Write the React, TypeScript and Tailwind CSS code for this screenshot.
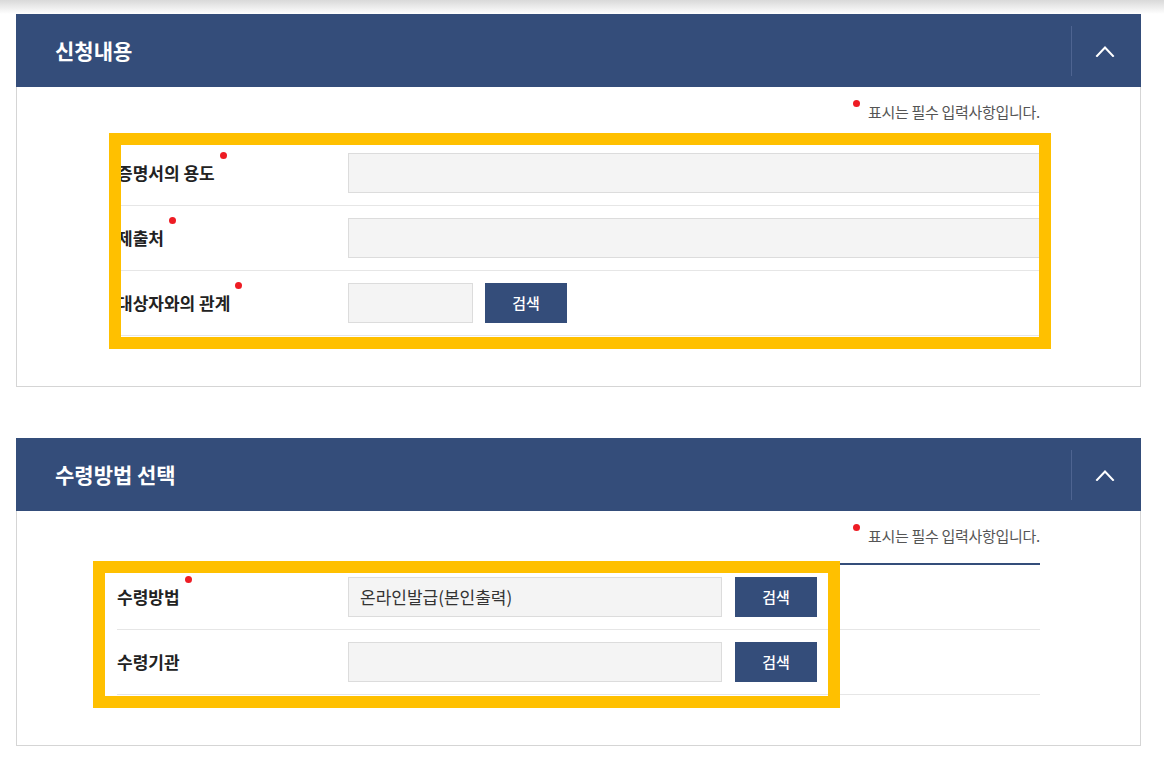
import React from "react";

const NAVY = "bg-[#344d7a]";

// Red required marker next to a label
const Dot = ({ className = "" }: { className?: string }) => (
  <span className={`inline-block w-[7px] h-[7px] rounded-full bg-[#ee1c24] ${className}`} />
);

const ChevronUp = () => (
  <svg width="20" height="12" viewBox="0 0 20 12" fill="none">
    <path d="M2 11L10 2.5L18 11" stroke="white" strokeWidth="2" strokeLinecap="square" />
  </svg>
);

const Panel: React.FC<{ title: string; children: React.ReactNode }> = ({ title, children }) => (
  <section className="w-[1125px]">
    <div className={`h-[73px] ${NAVY} flex items-center justify-between pl-[39px]`}>
      <h2 className="text-[21px] font-bold text-white">{title}</h2>
      <div className="h-[50px] w-[70px] border-l border-[#4e6491] flex items-center justify-center pr-1">
        <ChevronUp />
      </div>
    </div>
    <div className="border border-t-0 border-[#d5d5d5] px-[100px] pt-[15px] pb-[50px]">
      <p className="flex justify-end items-start text-[15px] leading-5 text-[#555] tracking-[-0.3px]">
        <Dot className="-mt-[2px] mr-[8px]" />
        표시는 필수 입력사항입니다.
      </p>
      <div className="mt-[17px] relative">{children}</div>
    </div>
  </section>
);

const Row: React.FC<{ label: string; required?: boolean; children: React.ReactNode }> = ({
  label,
  required,
  children,
}) => (
  <div className="h-[65px] border-b border-[#e6e6e6] flex items-center">
    <div className="w-[231px] text-[17px] font-bold text-[#222] flex">
      <span>{label}</span>
      {required && <Dot className="ml-[5px] relative -top-[8px]" />}
    </div>
    {children}
  </div>
);

const Input = ({ className = "", value = "" }: { className?: string; value?: string }) => (
  <div
    className={`h-[40px] bg-[#f4f4f4] border border-[#dcdcdc] flex items-center px-[11px] text-[17px] text-[#333] ${className}`}
  >
    {value}
  </div>
);

const SearchButton = () => (
  <button className={`h-[40px] w-[82px] ${NAVY} text-white text-[15px] font-medium`}>검색</button>
);

export default function App() {
  return (
    <div className="min-h-screen bg-white" style={{ fontFamily: '"Noto Sans CJK KR", "Noto Sans", sans-serif' }}>
      <div className="h-[14px] bg-gradient-to-b from-[#d9d9d9] to-white" />
      <div className="ml-4 flex flex-col gap-[51px]">
        <Panel title="신청내용">
          <div className="border-t-2 border-[#344d7a]">
            <Row label="증명서의 용도" required>
              <Input className="flex-1" />
            </Row>
            <Row label="제출처" required>
              <Input className="flex-1" />
            </Row>
            <Row label="대상자와의 관계" required>
              <Input className="w-[125px]" />
              <div className="ml-[12px]">
                <SearchButton />
              </div>
            </Row>
          </div>
          {/* highlight overlay */}
          <div className="absolute -left-[8px] -top-[6px] w-[942px] h-[216px] border-[12px] border-[#ffc000] pointer-events-none" />
        </Panel>

        <Panel title="수령방법 선택">
          <div className="border-t-2 border-[#344d7a]">
            <Row label="수령방법" required>
              <Input className="w-[374px]" value="온라인발급(본인출력)" />
              <div className="ml-[13px]">
                <SearchButton />
              </div>
            </Row>
            <Row label="수령기관">
              <Input className="w-[374px]" />
              <div className="ml-[13px]">
                <SearchButton />
              </div>
            </Row>
          </div>
          <div className="absolute -left-[24px] -top-[2px] w-[747px] h-[147px] border-[12px] border-[#ffc000] pointer-events-none" />
        </Panel>
      </div>
    </div>
  );
}
